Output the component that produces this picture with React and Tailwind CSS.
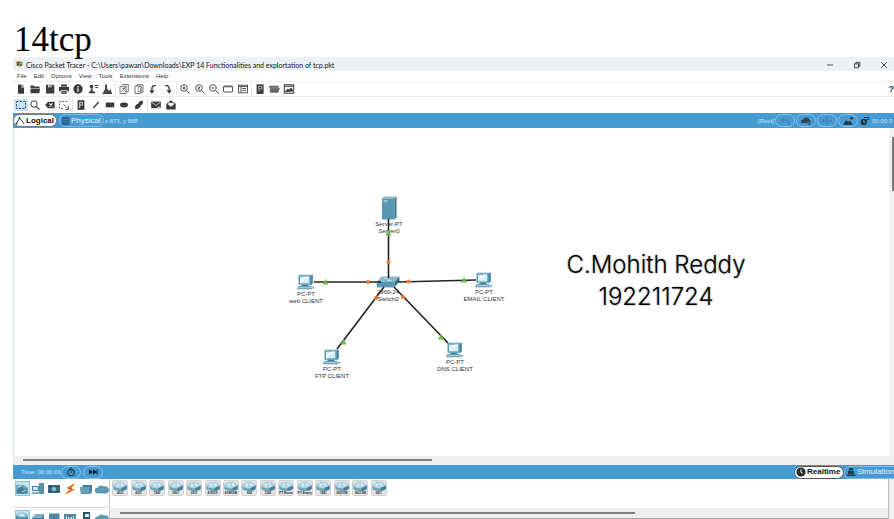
import React from "react";

const DARK = "#3a3a3a";

function Glyph({ children, size = "size-[14px]" }) {
  return (
    <svg viewBox="0 0 14 14" className={size} fill="none" stroke={DARK} strokeWidth="1" aria-hidden="true">
      {children}
    </svg>
  );
}

const glyphs = {
  New: <path d="M4 2.5h3.5v3H10v6.3H4z M8.2 2.5 10 4.6H8.2z" fill={DARK} stroke="none" />,
  Open: <path d="M2.5 3.5h3l1 1h5V6h-9z M2.5 6.6h9.6l-.8 4.6H2.5z" fill={DARK} stroke="none" />,
  Save: (
    <>
      <path d="M3 2.7h7l1.3 1.3v7.5H3z" fill={DARK} stroke="none" />
      <path d="M5 2.7h3.6v2.6H5z" fill="#e8e8e8" stroke="none" />
      <path d="M6.9 3v1.8" />
    </>
  ),
  Print: (
    <>
      <path d="M4 2.5h6v2H4z M2 5h10v4.4h-1.6V8.2H3.6v1.2H2z M4.3 9h5.4v2.7H4.3z" fill={DARK} stroke="none" />
      <path d="M5.3 10.2h3.4" stroke="#ddd" strokeWidth=".6" />
    </>
  ),
  "Activity wizard": (
    <>
      <circle cx="7" cy="7" r="4.7" fill={DARK} stroke="none" />
      <path d="M7 6.3v3.4M7 4.1v1.3" stroke="#fff" strokeWidth="1.2" />
    </>
  ),
  "User profile": (
    <>
      <circle cx="5.5" cy="4.6" r="1.8" fill={DARK} stroke="none" />
      <path d="M2.5 11.3h7L8.3 9.4 6.6 9V6.5H4.8V9l-1.5.4z" fill={DARK} stroke="none" />
      <path d="M8.5 3.5h4M9.3 5.5h2.6" />
    </>
  ),
  Files: (
    <>
      <path d="M5 2.5h2v4l2 2h1V5.8l2 5.7H2.8L4 8.5l1-1z" fill="#4b4b4b" stroke="none" />
      <path d="M2.5 11.5h9.5" />
    </>
  ),
  Copy: (
    <>
      <path d="M5 2.5h6.3v7.3H9M3 4.3h6v7.2H3z" stroke="#666" strokeWidth=".9" />
      <path d="M4.3 9.8 9.6 4M5 6.3h2.7M7 9h1.3" stroke="#666" strokeWidth=".9" />
    </>
  ),
  Paste: (
    <>
      <path d="M3 4h5.8v7.5H3zM5 4V2.6h6v7.6H9" stroke="#666" strokeWidth=".9" />
      <path d="M6.2 4.5h3v5h-3z" stroke="#777" strokeWidth=".8" />
    </>
  ),
  Undo: <path d="M9.8 3.6H8C6.2 3.6 5.9 5 5.9 7v3.5M4 8.2l1.9 2.4 1.9-2.4" strokeWidth="1.3" />,
  Redo: <path d="M4 3.6h1.6C7.6 3.6 8.2 5 8.2 7v3.5M6.3 8.2l1.9 2.4 1.9-2.4" strokeWidth="1.3" />,
  "Zoom in": (
    <>
      <circle cx="6" cy="6" r="3.3" stroke="#555" />
      <path d="m8.5 8.5 3 3M4.4 6h3.2M6 4.4v3.2" stroke="#444" />
    </>
  ),
  "Zoom reset": (
    <>
      <circle cx="6" cy="6" r="3.3" stroke="#555" />
      <path d="m8.5 8.5 3 3M5 5.2h2L5 7h2" stroke="#444" strokeWidth=".9" />
    </>
  ),
  "Zoom out": (
    <>
      <circle cx="6" cy="6" r="3.3" stroke="#555" />
      <path d="m8.5 8.5 3 3M4.4 6h3.2" stroke="#444" />
    </>
  ),
  Window: (
    <>
      <rect x="2.5" y="4" width="9" height="6" rx=".5" stroke="#555" />
      <path d="M2.5 4.8h9" stroke="#555" />
    </>
  ),
  Palette: (
    <>
      <rect x="2.5" y="3.2" width="9" height="7.6" stroke="#555" />
      <path d="M2.5 4.5h9M5 5v5.5M6.3 6.5H10M6.3 8.5H10" stroke="#555" />
    </>
  ),
  "Custom devices": (
    <>
      <rect x="3.6" y="2.3" width="7" height="9.6" fill={DARK} stroke="none" />
      <path d="M5.5 4.3h3.3v2.6H5.5zM5.5 8.6h1.6" stroke="#ccc" strokeWidth=".8" />
    </>
  ),
  Cluster: <path d="M2.5 4h8.8v1.6H2.5z M3 6.3h9.5L11 10.4H3.4z" fill="#666" stroke="#555" strokeWidth=".5" />,
  Network: (
    <>
      <rect x="2.3" y="2.8" width="9.4" height="8.4" fill="#eee" />
      <path d="M2.3 4.2h9.4M3.5 9.5l2-2 2 .6 1.6-2 1.6 2.8z" fill={DARK} />
    </>
  ),
  Select: <rect x="2.5" y="3.5" width="9" height="7" stroke="#25587f" strokeDasharray="2.2 1.2" />,
  Inspect: (
    <>
      <circle cx="6" cy="6" r="3.2" />
      <path d="m8.3 8.3 3.3 3.3" strokeWidth="1.2" />
    </>
  ),
  Delete: (
    <>
      <path d="M2.2 7 5 3.8h6.6v6.4H5z" fill={DARK} stroke="none" />
      <path d="m6.2 5.4 3.2 3.2m0-3.2L6.2 8.6" stroke="#fff" strokeWidth="1.1" />
    </>
  ),
  Resize: (
    <>
      <path d="M10.5 3.5h-8v7h4" stroke="#666" strokeDasharray="2 1.3" />
      <path d="m6.5 6.3 4.5 4.5M11.4 8v3.4H8.3" stroke="#555" />
    </>
  ),
  Note: (
    <>
      <rect x="3.6" y="2.2" width="6.8" height="9.6" fill={DARK} stroke="none" />
      <path d="M5.7 10V4.3h2.7v2.8H6.2" stroke="#eee" strokeWidth=".9" />
    </>
  ),
  Line: <path d="m4.3 10 5.4-6" strokeWidth="1.3" />,
  Rectangle: <rect x="2.8" y="4.5" width="8.4" height="4.8" fill={DARK} stroke="none" />,
  Ellipse: <ellipse cx="7" cy="7" rx="4" ry="2.4" fill={DARK} stroke="none" />,
  Freeform: <path d="M3.2 10.8C2.6 8.5 4 6 6.2 5.7 6.8 3.5 8.5 2.3 11 2.8c.2 2.3-.4 4-2.2 4.8C8.4 9.5 6 11.8 3.2 10.8z" fill={DARK} stroke="none" />,
  "Simple PDU": (
    <>
      <path d="M2.2 3.6h9.6v6.6H2.2z" fill={DARK} stroke="none" />
      <path d="m3 4.6 4 2.7 4-2.7M9.8 8v3.4M8.2 9.6h3.4" stroke="#ddd" strokeWidth=".8" />
    </>
  ),
  "Complex PDU": (
    <>
      <path d="M2.3 6 7 2.3 11.7 6v5.5H2.3z" fill={DARK} stroke="none" />
      <path d="M4.2 4.8h5.6v2L7 8.8l-2.8-2z" fill="#eee" stroke="none" />
    </>
  ),
};

function ToolGroup({ names, width, active }) {
  return (
    <div className={"flex " + width}>
      {names.map((n) => (
        <button
          key={n}
          aria-label={n}
          className={"flex h-3 min-w-0 flex-1 items-center justify-center " + (n === active ? "bg-[#c9e2f7]" : "")}
        >
          <Glyph size="size-[14px] shrink-0">{glyphs[n]}</Glyph>
        </button>
      ))}
    </div>
  );
}

function Separator() {
  return <div className="mx-px h-3 w-px bg-[#e4e4e4]" />;
}

function Pill({ label, children, className = "" }) {
  return (
    <button
      aria-label={label}
      className={"flex h-[13px] w-5 items-center justify-center rounded-full border border-[#8cc3e8] " + className}
    >
      {children}
    </button>
  );
}

function Pc() {
  return (
    <svg viewBox="0 0 18 16" className="h-4 w-[18px]" aria-hidden="true">
      <path d="m14 1.4 1.8-.9v9L14 11z" fill="#3f7f99" />
      <path d="M1.8 1.3 3.4.4h12.4L14 1.3z" fill="#9cc5d6" />
      <rect x="1.5" y="1.2" width="12.6" height="9.6" fill="#5b9ab3" />
      <rect x="3" y="2.6" width="9.3" height="6.8" fill="#d8ecf3" />
      <path d="M3 9.4V5.5L9 2.6h3.3z" fill="#eff8fb" />
      <path d="M5 10.8h6l.8 1.7H4z" fill="#3f7f99" />
      <path d="M1.6 12.3h12.2l1 2.6H.4z" fill="#7fb2c7" stroke="#3f7f99" strokeWidth=".6" />
      <path d="M1.5 13.7h12.4" stroke="#cfe5ee" strokeWidth=".6" />
      <path d="m15.3 12.7 2 .4-.2 1.5-1.8-.3z" fill="#5b9ab3" />
    </svg>
  );
}

function Server() {
  return (
    <svg viewBox="0 0 16 24" className="h-6 w-4" aria-hidden="true">
      <path d="M1 2.5 3 .5h12.5l-2 2z" fill="#8ab9cb" />
      <path d="m13.5 2.5 2-2v21l-2 2z" fill="#35718b" />
      <rect x="1" y="2.5" width="12.5" height="21" fill="#5796b0" />
      <path d="M2.3 4.5h4.2M2.3 6h4.2" stroke="#b8d8e4" strokeWidth=".8" />
    </svg>
  );
}

function Switch() {
  return (
    <svg viewBox="0 0 24 12" className="h-3 w-6" aria-hidden="true">
      <path d="M.8 6 5.5.6h18L18.6 6z" fill="#86b6c9" />
      <path d="M.8 6h17.8v5.4H.8z" fill="#5796b0" />
      <path d="M18.6 6 23.5.6V5l-4.9 6.4z" fill="#35718b" />
      <path d="M8 2.2h4.3M11 4.3h5" stroke="#dcedf3" strokeWidth=".9" />
    </svg>
  );
}

const nodes = [
  { type: "Server", lines: ["Server-PT", "Server0"], pos: "left-[346px] top-[68px]" },
  { type: "Switch", lines: ["2960-24", "Switch0"], pos: "left-[345px] top-[148px]" },
  { type: "Pc", lines: ["PC-PT", "web CLIENT"], pos: "left-[263px] top-[146px]" },
  { type: "Pc", lines: ["PC-PT", "EMAIL CLIENT"], pos: "left-[441px] top-[144px]" },
  { type: "Pc", lines: ["PC-PT", "FTP CLIENT"], pos: "left-[289px] top-[221px]" },
  { type: "Pc", lines: ["PC-PT", "DNS CLIENT"], pos: "left-[412px] top-[214px]" },
];
const shapes = { Server, Switch, Pc };

const links = [
  [375.5, 91, 375.5, 150],
  [301, 154, 368, 154],
  [385, 154, 463, 152],
  [371, 159, 324, 221],
  [381, 159, 435, 215],
];
const up = [[375.5, 105], [312.5, 154], [451, 152], [330.5, 214], [428, 209]];
const pending = [[375.5, 134], [355, 154], [395.5, 153.5], [363, 170], [390, 169]];

function Canvas() {
  return (
    <main className="relative min-w-0 flex-1 overflow-hidden bg-white shadow-[inset_1px_0_0_#d5e6f2]">
      {nodes.map((n) => {
        const Shape = shapes[n.type];
        return (
          <div key={n.lines[1]} className={"absolute flex w-[60px] flex-col items-center text-[6px] leading-[7px] text-[#333] " + n.pos}>
            <Shape />
            <span className="pt-px">{n.lines[0]}</span>
            <span>{n.lines[1]}</span>
          </div>
        );
      })}
      <svg className="absolute inset-0 h-full w-full" aria-hidden="true">
        {links.map(([a, b, c, d]) => (
          <line key={a + "-" + c} x1={a} y1={b} x2={c} y2={d} stroke="#222" strokeWidth="1.6" />
        ))}
        {up.map(([x, y]) => (
          <path key={x} d={`M${x} ${y - 3}l3 5.5h-6z`} fill="#6cba45" />
        ))}
        {pending.map(([x, y]) => (
          <circle key={x + "," + y} cx={x} cy={y} r="2.1" fill="#ee7a30" />
        ))}
      </svg>
      <div className="absolute left-[533px] top-[121px] w-[220px] text-center font-['Inter'] text-[24px] leading-8 font-light text-black [text-shadow:0_0_2px_#888]">
        <p>C.Mohith Reddy</p>
        <p>192211724</p>
      </div>
    </main>
  );
}

const categories = {
  "Network devices": (
    <>
      <path d="M1 3h8l4 3v6H1z" fill="#6fa8bf" />
      <path d="m2 8 4-4 3 3 3-1v4l-4 2-6-1z" fill="#3f7f99" />
      <path d="m3 5 3-1M7 10l4-2" stroke="#e0f0f5" />
    </>
  ),
  "End devices": (
    <>
      <path d="M8 1h5v11H8z" fill="#5b93ab" />
      <path d="M1 4h7v5H1z" fill="#4a8aa5" />
      <path d="M2.2 5h4.6v3H2.2z" fill="#d8ecf3" />
      <path d="M1 10h7l1 2H0z" fill="#7fb2c7" />
    </>
  ),
  Components: (
    <>
      <path d="M1 3h12v8H1z" fill="#3a6b80" />
      <circle cx="7" cy="7" r="2" fill="#9cc5d6" />
      <path d="M2 4.5h2M10 4.5h2M2 9.5h2M10 9.5h2" stroke="#1d3b48" />
    </>
  ),
  Connections: (
    <>
      <path d="M12.5 1 3 6.3l4 .8L1.5 13 12 7.5l-4-.8z" fill="#ee7a22" />
      <path d="m10 2.5-5 3.6 4 .7-5 4" stroke="#d4471e" strokeWidth=".7" fill="none" />
    </>
  ),
  Miscellaneous: (
    <>
      <path d="M1 5h2l1-2h9v7l-2 2H2z" fill="#3f7f99" />
      <path d="M1 5h9.5v6.5H2z" fill="#6a9fb5" />
    </>
  ),
  "Multiuser connection": (
    <path d="M3 11a3 2.5 0 0 1 0-5 3.6 3 0 0 1 6-1 3 3 0 0 1 2.6 6z" fill="#5f9cb5" stroke="#3f7f99" strokeWidth=".7" />
  ),
};

const subcategories = {
  Routers: (
    <>
      <path d="M1 4v6h12V4z" fill="#4a8aa5" />
      <ellipse cx="7" cy="4" rx="6" ry="2.6" fill="#9cc5d6" />
      <path d="m4 3 5 2M9 3 5 5" stroke="#fff" strokeWidth=".8" />
    </>
  ),
  Switches: (
    <>
      <path d="m1 7 3-4h9l-3 4z" fill="#7fb2c7" />
      <path d="M1 7h9l3-4v5l-3 3H1z" fill="#3f7f99" />
    </>
  ),
  Hubs: <path d="M2 2.5h10.5V11H2z" fill="#4a8aa5" />,
  Wireless: (
    <>
      <path d="M1 3h12v8H1z" fill="#4a8aa5" />
      <path d="M3.5 5v4M10.5 5v4M5.5 6v2h3V6" stroke="#e0f0f5" fill="none" />
    </>
  ),
  Security: (
    <>
      <path d="M4 1h7v11H4z" fill="#2f5666" />
      <path d="M6 3h4v3H6z" fill="#e0f0f5" />
    </>
  ),
  WAN: (
    <path d="M3 11a3 2.5 0 0 1 0-5 3.6 3 0 0 1 6-1 3 3 0 0 1 2.6 6z" fill="#5f9cb5" stroke="#3f7f99" strokeWidth=".7" />
  ),
};

function CategoryRow({ items, active }) {
  return (
    <div className="grid w-24 grid-cols-6 justify-items-center">
      {Object.keys(items).map((n) => (
        <button
          key={n}
          aria-label={n}
          className={"flex size-[15px] items-center justify-center " + (n === active ? "bg-[#c3e6ee] outline outline-[#8fc6d3] -outline-offset-1" : "")}
        >
          <svg viewBox="0 0 14 14" className="size-[14px]" aria-hidden="true">
            {items[n]}
          </svg>
        </button>
      ))}
    </div>
  );
}

const devices = ["4331", "4321", "1941", "2901", "2911", "819IOX", "819HGW", "829", "1240", "PT-Router", "PT-Empty", "1841", "2620XM", "2621XM", "2811"];

function Device({ name }) {
  return (
    <button className="flex h-4 w-4 flex-col items-center overflow-hidden rounded-[2px] border border-[#d2d2d2] bg-[#e6e6e6]">
      <svg viewBox="0 0 14 10" className="h-[10px] w-[14px] shrink-0" aria-hidden="true">
        <path d="M.3 3.9v3.3c0 3.6 13.4 3.6 13.4 0V3.9z" fill="#6ba5bc" />
        <ellipse cx="7" cy="3.9" rx="6.7" ry="3.5" fill="#b4d3df" />
        <path d="m3.4 2.8 2.4 1M10.6 5l-2.4-1M10 2.4 8 3.4M4 5.4l2-1" stroke="#fff" strokeWidth=".8" />
        <path d="M8.5 9.7c3.2-.3 5.2-1.2 5.2-2.5V4.5L8.5 7z" fill="#3f7f99" />
      </svg>
      <span className="whitespace-nowrap text-[3px] leading-[4px] font-bold text-[#222]">{name}</span>
    </button>
  );
}

export default function App() {
  return (
    <div className="flex h-screen flex-col overflow-hidden bg-white pl-[13px] font-['Liberation_Sans',sans-serif]">
      <h1 className="relative z-10 h-[57px] shrink-0 pl-px pt-[19px] font-['Liberation_Serif',serif] text-[35px] leading-[42px] text-black">14tcp</h1>

      <div className="flex min-h-0 flex-1 flex-col">
        <header className="flex h-[14px] shrink-0 items-center bg-[#eef2f7] pl-[3px] pr-[6px] pt-px">
          <svg viewBox="0 0 10 10" className="mr-[3px] size-[7px]" aria-hidden="true">
            <path d="M1 1h8v6H1z" fill="#3c5a35" />
            <path d="M1 1h4v3H1z" fill="#c8402c" />
            <path d="M5 2h4v3H5z" fill="#8cbf4a" />
            <path d="m3 6 3-1v4H4z" fill="#d5a53a" />
          </svg>
          <span className="whitespace-nowrap font-['Lato',sans-serif] text-[7px] leading-[10px] text-[#111]">
            Cisco Packet Tracer - C:\Users\pawan\Downloads\EXP 14 Functionalities and explortation of tcp.pkt
          </span>
          <div className="ml-auto flex gap-[19px]">
            <button aria-label="Minimize"><svg viewBox="0 0 8 8" className="size-2" stroke="#555" fill="none"><path d="M1 4h6" /></svg></button>
            <button aria-label="Restore"><svg viewBox="0 0 8 8" className="size-2" stroke="#333" fill="none"><path d="M1.5 2.8h4v4h-4zM2.8 2.5V1.4h4v4H5.6" strokeWidth=".9" /></svg></button>
            <button aria-label="Close"><svg viewBox="0 0 8 8" className="size-2" stroke="#333" fill="none"><path d="m1.2 1.2 5.6 5.6m0-5.6L1.2 6.8" strokeWidth=".9" /></svg></button>
          </div>
        </header>

        <nav className="flex h-[11px] shrink-0 items-center gap-[7px] border-b border-[#f0f0f0] pl-1 text-[6px] leading-[8px] text-[#333]">
          {["File", "Edit", "Options", "View", "Tools", "Extensions", "Help"].map((m) => (
            <button key={m}>{m}</button>
          ))}
        </nav>

        <div className="flex h-[15px] shrink-0 items-center border-b border-[#ececec] pl-px">
          <ToolGroup width="w-[100px]" names={["New", "Open", "Save", "Print", "Activity wizard", "User profile", "Files"]} />
          <Separator />
          <ToolGroup width="w-[58px]" names={["Copy", "Paste", "Undo", "Redo"]} />
          <Separator />
          <ToolGroup width="w-[72px]" names={["Zoom in", "Zoom reset", "Zoom out", "Window", "Palette"]} />
          <Separator />
          <ToolGroup width="w-[43px]" names={["Custom devices", "Cluster", "Network"]} />
          <button className="ml-auto text-[9px] leading-[12px] font-bold text-[#333]">?</button>
        </div>

        <div className="flex h-4 shrink-0 items-center pl-px">
          <ToolGroup width="w-[57px]" active="Select" names={["Select", "Inspect", "Delete", "Resize"]} />
          <Separator />
          <ToolGroup width="w-[72px]" names={["Note", "Line", "Rectangle", "Ellipse", "Freeform"]} />
          <Separator />
          <ToolGroup width="w-[29px]" names={["Simple PDU", "Complex PDU"]} />
        </div>

        <div className="flex h-[15px] shrink-0 items-center overflow-hidden bg-[#479bd3] text-[6px] leading-[8px] text-[#cfe6f5]">
          <button className="flex h-[13px] w-[44px] items-center rounded-full border border-[#777] bg-white pl-px text-[8px] leading-[10px] font-bold text-[#111]">
            <svg viewBox="0 0 10 10" className="mr-px size-[10px] shrink-0" fill="none" stroke="#222" strokeWidth=".9" aria-hidden="true">
              <path d="M1.5 7.5 4.5 2l3 3.5L9 8" />
              <circle cx="1.6" cy="7.6" r=".6" />
              <circle cx="4.5" cy="2" r=".6" />
            </svg>
            Logical
          </button>
          <button className="ml-[2px] flex h-[13px] w-[45px] items-center rounded-full border border-[#7ebbe3] pl-px text-[8px] leading-[10px] text-[#e6f3fb]">
            <svg viewBox="0 0 9 10" className="mr-px h-[10px] w-[9px] shrink-0" aria-hidden="true">
              <path d="M1 1h7.5v8H1z" fill="#26658f" />
              <path d="M2 3.5h5.5M2 6h5.5" stroke="#4b93bf" strokeWidth=".7" />
            </svg>
            Physical
          </button>
          <span className="ml-px">x 673, y 568</span>

          <div className="ml-auto flex shrink-0 items-center gap-px">
            <span>[Root]</span>
            <Pill label="Back">
              <svg viewBox="0 0 12 10" className="h-[10px] w-3" fill="none" stroke="#3579a8"><path d="M5 1.5 2 4l3 2.5M2 4h5.5C9.5 4 10 5.5 10 8" /></svg>
            </Pill>
            <Pill label="New cluster">
              <svg viewBox="0 0 12 10" className="h-[10px] w-3"><path d="M1.5 7C.5 5 2 3.5 3.5 3.5 4 1 9 .8 9.3 4c1.6.2 1.8 2.4.6 3l-2-2-2 2z" fill="#2d4453" /><path d="m7 6 3 3" stroke="#2d4453" strokeWidth="1.3" /></svg>
            </Pill>
            <Pill label="Move object">
              <svg viewBox="0 0 12 10" className="h-[10px] w-3" fill="none" stroke="#3579a8"><path d="M6 .8v8.4M1.5 5h9M3 3.7 1.5 5 3 6.3M9 3.7 10.5 5 9 6.3" strokeDasharray="3 1" /></svg>
            </Pill>
            <Pill label="Set background">
              <svg viewBox="0 0 12 10" className="h-[10px] w-3" fill="#1f3441"><path d="M1 8.8 4.3 4l2 2.3L8 4.5l2.6 4.3z" /><circle cx="9.5" cy="2.3" r="1.3" /></svg>
            </Pill>
            <button className="ml-px flex w-[34px] items-center gap-[2px] overflow-hidden whitespace-nowrap">
              <svg viewBox="0 0 10 10" className="size-[10px] shrink-0" aria-hidden="true">
                <circle cx="3.8" cy="6" r="3.2" fill="#1f3441" />
                <path d="M4 1.5h5.5M6.5 3.6h3" stroke="#1f3441" />
                <path d="M3.8 4v2.2h1.6" stroke="#7bb8df" strokeWidth=".8" fill="none" />
              </svg>
              00:00:3
            </button>
          </div>
        </div>

        <div className="flex min-h-0 flex-1">
          <Canvas />
          <div className="flex w-[5px] justify-end bg-[#f0f0f0] pt-[9px]">
            <div className="h-[54px] w-[2px] bg-[#777]" />
          </div>
        </div>
        <div className="flex h-[9px] shrink-0 bg-[#efefef] pl-[10px] pt-[3px]">
          <div className="h-[2px] w-[47%] bg-[#808080]" />
        </div>

        <div className="flex h-[14px] shrink-0 items-center overflow-hidden bg-[#479bd3] pl-2 text-[6px] leading-[8px] text-[#d6eaf7]">
          <span>Time: 00:00:01</span>
          <Pill label="Power cycle devices">
            <svg viewBox="0 0 10 10" className="size-[10px]" fill="none" stroke="#1b3345" strokeWidth="1.1"><circle cx="5" cy="5.6" r="3.2" /><path d="M5 3.8V6M3.8 1h2.4" /></svg>
          </Pill>
          <Pill label="Fast forward" className="ml-[2px]">
            <svg viewBox="0 0 10 10" className="size-[10px]" fill="#14222d"><path d="M1 2.3 5 5 1 7.7zM5 2.3 9 5 5 7.7zM8.6 2.5h1v5h-1z" /></svg>
          </Pill>
          <button className="ml-auto flex h-[13px] w-[50px] shrink-0 items-center rounded-full border border-[#555] bg-white pl-px text-[8px] leading-[10px] font-bold text-[#111]">
            <svg viewBox="0 0 10 10" className="mr-px size-[10px] shrink-0" aria-hidden="true">
              <circle cx="5" cy="5" r="4.6" fill="#2b2b2b" />
              <path d="M5 2.3V5.2l1.6 1" stroke="#fff" fill="none" />
            </svg>
            Realtime
          </button>
          <button className="flex h-[13px] w-[50px] shrink-0 items-center rounded-l-full border-y border-l border-[#7ebbe3] pl-px text-[8px] leading-[10px] text-[#e6f3fb]">
            <svg viewBox="0 0 10 10" className="mr-px size-[10px] shrink-0" fill="#20394a" aria-hidden="true">
              <path d="M3 1h4v2.4H3zM2 4h6v3H2zM.6 7.4h8.8V9H.6z" />
            </svg>
            Simulation
          </button>
        </div>

        <footer className="flex h-10 shrink-0 overflow-hidden">
          <div className="flex w-[97px] shrink-0 flex-col border-r border-[#c8c8c8] pl-px">
            <div className="h-[29px] shrink-0 border-b border-[#dcdcdc] pt-[2px]">
              <CategoryRow items={categories} active="Network devices" />
            </div>
            <div className="pt-[2px]">
              <CategoryRow items={subcategories} active="Routers" />
            </div>
          </div>
          <div className="flex min-w-0 flex-1 flex-col">
            <div className="h-[29px] shrink-0 pl-px pt-px">
              <div className="grid w-[277px] grid-cols-[repeat(15,1fr)] justify-items-center">
                {devices.map((d) => (
                  <Device key={d} name={d} />
                ))}
              </div>
            </div>
            <div className="h-[11px] border-b border-[#a8a8a8] bg-[#efefef] pl-[10px] pt-[4px]">
              <div className="h-[2px] w-[67%] bg-[#808080]" />
            </div>
          </div>
          <div className="w-[6px] border-l border-[#b8b8b8] bg-[#f0f0f0]" />
        </footer>
      </div>
    </div>
  );
}
